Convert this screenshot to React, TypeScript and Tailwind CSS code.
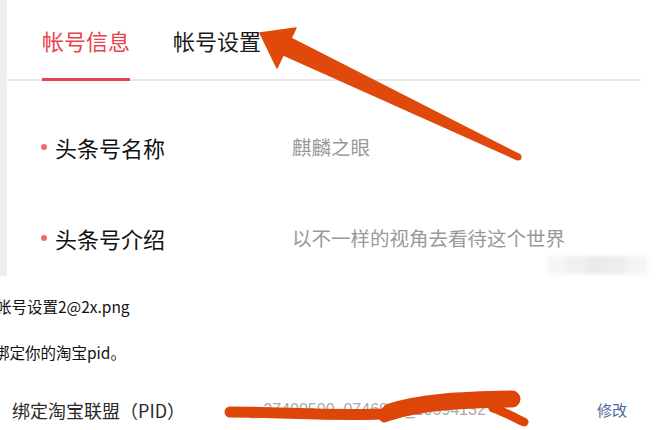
import React from "react";

const cjk = { fontFamily: '"Noto Sans CJK SC", "Noto Sans", sans-serif' };

export default function App() {
  return (
    <div className="relative w-[669px] h-[430px] overflow-hidden bg-white" style={cjk}>
      {/* top app screenshot */}
      <div className="flex h-[276px]">
        <div className="w-[7px] bg-[#efefef]" />
        <div className="flex-1 relative">
          <div className="w-[634px] flex items-end pl-[35px] gap-[43px] border-b-2 border-[#e8e8e8]">
            <div className="pt-[25px] pb-[23px] leading-[30px] text-[22px] text-[#e8434c] border-b-[3px] border-[#e04550] mb-[-2px]">
              帐号信息
            </div>
            <div className="pt-[25px] pb-[23px] leading-[30px] text-[22px] text-[#1a1a1a] border-b-[3px] border-transparent mb-[-2px]">
              帐号设置
            </div>
          </div>
          <div className="mt-[51px] flex items-center pl-[34px] leading-[30px]">
            <span className="w-[6px] h-[6px] rounded-full bg-[#f26b6b]" />
            <span className="ml-[8px] w-[237px] text-[22px] text-[#111]">头条号名称</span>
            <span className="text-[19.5px] text-[#999]">麒麟之眼</span>
          </div>
          <div className="mt-[61px] flex items-center pl-[34px] leading-[30px]">
            <span className="w-[6px] h-[6px] rounded-full bg-[#f26b6b]" />
            <span className="ml-[8px] w-[237px] text-[22px] text-[#111]">头条号介绍</span>
            <span className="text-[19.5px] text-[#999]">以不一样的视角去看待这个世界</span>
          </div>
          <div className="absolute left-[540px] top-[256px] w-[100px] h-[18px] flex blur-[2px]">
            <div className="flex-1 bg-[#f5f5f5]" />
            <div className="flex-1 bg-[#efefef]" />
            <div className="flex-1 bg-[#eaeaea]" />
            <div className="flex-1 bg-[#ededed]" />
            <div className="flex-1 bg-[#f4f4f4]" />
          </div>
        </div>
      </div>

      {/* document part */}
      <div className="mt-[19px] ml-[-4px] text-[15.5px] leading-[22px] text-[#111]">帐号设置2@2x.png</div>
      <div className="mt-[24px] ml-[-6px] text-[15.5px] leading-[22px] text-[#111]">绑定你的淘宝pid。</div>
      <div className="mt-[36px] flex items-center leading-[22px]">
        <span className="ml-[12px] w-[238px] text-[18px] text-[#2a2a2a]">绑定淘宝联盟（PID）</span>
        <span
          className="w-[347px] text-[16px] text-[#aaa]"
          style={{ fontFamily: '"Liberation Sans", sans-serif' }}
        >
          _ 27400500_0746821_10594132
        </span>
        <span className="text-[15px] text-[#4a6a9a]">修改</span>
      </div>

      {/* annotations */}
      <svg className="absolute left-0 top-0 pointer-events-none" width="669" height="430" viewBox="0 0 669 430">
        <polygon points="290.3,37 519.5,153.8 516.5,160.2 281.7,55" fill="#df4a0c" />
        <circle cx="518" cy="157" r="3.6" fill="#df4a0c" />
        <polygon points="260,33 296,28 277,68" fill="#df4a0c" strokeLinejoin="round" stroke="#df4a0c" strokeWidth="1.5" />
        <g stroke="#de4508" strokeLinecap="round" strokeLinejoin="round" fill="none">
          <path d="M230 412 C 280 412, 330 416, 382 414" strokeWidth="11" />
          <path d="M390 412 C 420 402, 460 400, 512 399" strokeWidth="17" />
          <path d="M384 418 C 400 412, 410 410, 420 409" strokeWidth="9" />
          <path d="M493 408 C 505 412, 515 418, 524 422" strokeWidth="9" />
        </g>
      </svg>
    </div>
  );
}
